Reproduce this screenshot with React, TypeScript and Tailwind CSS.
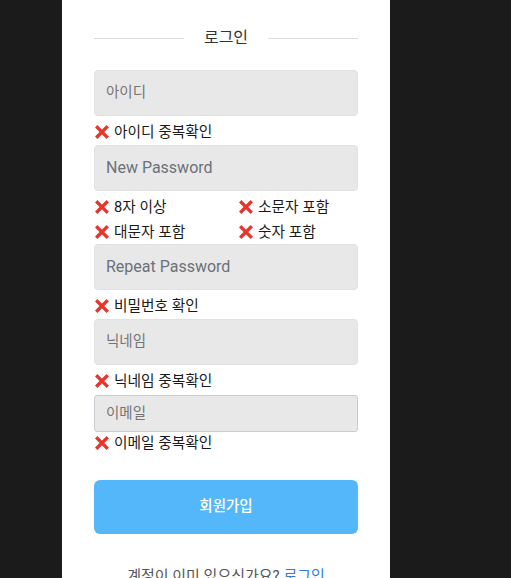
import React from "react";

const FONT = "Roboto, 'Noto Sans CJK KR', sans-serif";

function XIcon() {
  return (
    <svg width="14" height="14" viewBox="0 0 14 14" className="shrink-0">
      <path d="M2.4 2.4 L11.6 11.6 M11.6 2.4 L2.4 11.6" stroke="#e8352c" strokeWidth="3.4" strokeLinecap="square" />
    </svg>
  );
}

function Err({ text }: { text: string }) {
  return (
    <div className="flex items-center gap-[5px] pl-[1px] text-[14.7px] text-[#1a1a1a] h-[24px] leading-[24px]">
      <XIcon />
      <span>{text}</span>
    </div>
  );
}

function Field({ ph, ko }: { ph: string; ko?: boolean }) {
  return (
    <div className="h-[46px] rounded-[4px] bg-[#e8e8e8] border border-[#e1e1e1] flex items-center px-[11px]">
      <span className={ko ? "text-[14.5px] text-[#757575]" : "text-[16px] text-[#6b717a]"}>{ph}</span>
    </div>
  );
}

export default function App() {
  return (
    <div className="h-[578px] overflow-hidden bg-[#1b1b1b]" style={{ fontFamily: FONT }}>
      <div className="ml-[62px] w-[328px] bg-white px-[32px] pt-[26px] pb-[40px]">
        <div className="h-[24px] flex items-center gap-[20px]">
          <div className="flex-1 h-px bg-[#dcdcdc]" />
          <span className="text-[16px] text-[#333]">로그인</span>
          <div className="flex-1 h-px bg-[#dcdcdc]" />
        </div>
        <div className="mt-[20px]">
          <Field ph="아이디" ko />
          <div className="h-[29px] pt-[4px]">
            <Err text="아이디 중복확인" />
          </div>
          <Field ph="New Password" />
          <div className="h-[53px] pt-[4px] grid grid-cols-[144px_1fr]">
            <Err text="8자 이상" />
            <Err text="소문자 포함" />
            <Err text="대문자 포함" />
            <Err text="숫자 포함" />
          </div>
          <Field ph="Repeat Password" />
          <div className="h-[29px] pt-[4px]">
            <Err text="비밀번호 확인" />
          </div>
          <Field ph="닉네임" ko />
          <div className="h-[30px] pt-[4px]">
            <Err text="닉네임 중복확인" />
          </div>
          <div className="h-[37px] rounded-[3px] bg-[#e8e8e8] border border-[#c9cdd2] flex items-center px-[11px]">
            <span className="text-[14.5px] text-[#757575]">이메일</span>
          </div>
          <div className="h-[22px] flex items-center">
            <Err text="이메일 중복확인" />
          </div>
          <button className="mt-[26px] w-full h-[54px] rounded-[6px] bg-[#54b7f9] text-white text-[14.5px] font-medium flex items-center justify-center">
            회원가입
          </button>
          <div className="mt-[32px] text-center text-[15px] leading-[20px] text-[#555]">
            계정이 이미 있으신가요? <span className="text-[#2f7de1]">로그인</span>
          </div>
        </div>
      </div>
    </div>
  );
}
